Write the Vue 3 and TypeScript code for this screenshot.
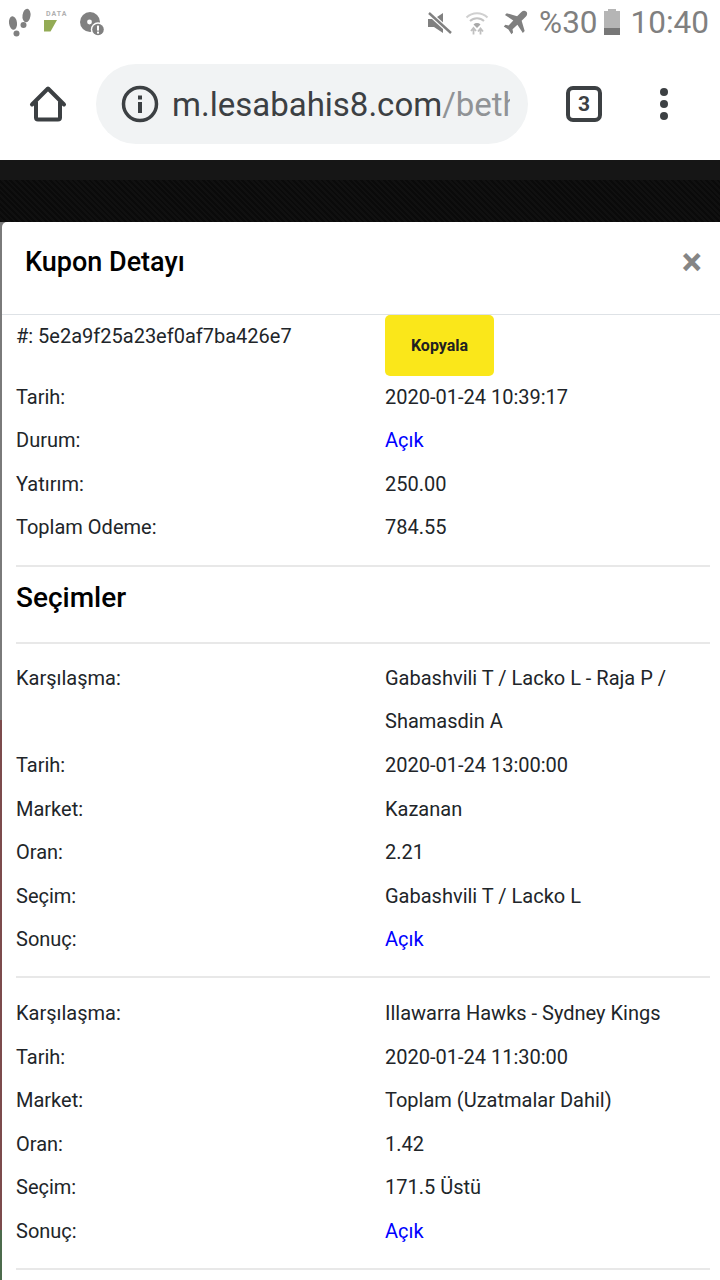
<script setup lang="ts">
interface Row { label: string; value: string; open?: boolean }
const summary: Row[] = [
  { label: 'Tarih:', value: '2020-01-24 10:39:17' },
  { label: 'Durum:', value: 'Açık', open: true },
  { label: 'Yatırım:', value: '250.00' },
  { label: 'Toplam Odeme:', value: '784.55' },
]
const selections: Row[][] = [
  [
    { label: 'Karşılaşma:', value: 'Gabashvili T / Lacko L - Raja P / Shamasdin A' },
    { label: 'Tarih:', value: '2020-01-24 13:00:00' },
    { label: 'Market:', value: 'Kazanan' },
    { label: 'Oran:', value: '2.21' },
    { label: 'Seçim:', value: 'Gabashvili T / Lacko L' },
    { label: 'Sonuç:', value: 'Açık', open: true },
  ],
  [
    { label: 'Karşılaşma:', value: 'Illawarra Hawks - Sydney Kings' },
    { label: 'Tarih:', value: '2020-01-24 11:30:00' },
    { label: 'Market:', value: 'Toplam (Uzatmalar Dahil)' },
    { label: 'Oran:', value: '1.42' },
    { label: 'Seçim:', value: '171.5 Üstü' },
    { label: 'Sonuç:', value: 'Açık', open: true },
  ],
]
</script>

<template>
  <div class="screen">
    <header class="status">
      <div class="status-left">
        <svg width="24" height="30" viewBox="0 0 24 30" class="steps">
          <ellipse cx="5" cy="15" rx="4" ry="6.8" fill="#808080" transform="rotate(-8 5 15)" />
          <circle cx="8.5" cy="25.5" r="3" fill="#808080" />
          <ellipse cx="18.5" cy="7.5" rx="4" ry="6.8" fill="#808080" transform="rotate(8 18.5 7.5)" />
          <circle cx="15.5" cy="17" r="3" fill="#808080" />
        </svg>
        <div class="data">
          <span class="data-label">DATA</span>
          <svg width="14" height="12" viewBox="0 0 14 12"><polygon points="0,0 13,0 6.5,11.5 0,11.5" fill="#93ab55" /></svg>
        </div>
        <svg width="26" height="26" viewBox="0 0 26 26" class="disc">
          <circle cx="10" cy="10" r="10" fill="#808080" />
          <circle cx="9.5" cy="10" r="2.4" fill="#fff" />
          <circle cx="18" cy="17.5" r="7.2" fill="#fff" />
          <circle cx="18" cy="17.5" r="5.8" fill="#808080" />
          <rect x="17" y="13.6" width="2" height="5" fill="#fff" />
          <rect x="17" y="19.6" width="2" height="2" fill="#fff" />
        </svg>
      </div>
      <div class="status-right">
        <svg width="26" height="22" viewBox="0 0 26 22" class="mute">
          <path d="M1 7h6l9-6v20l-9-6H1z" fill="#808080" />
          <path d="M2 1l22 20" stroke="#fff" stroke-width="5" />
          <path d="M2 1l22 20" stroke="#808080" stroke-width="2.4" />
        </svg>
        <svg width="24" height="26" viewBox="0 0 24 26" class="wifi" fill="none">
          <path d="M1.5 7.5a15 15 0 0 1 21 0" stroke="#d0d0d0" stroke-width="2" />
          <path d="M5 11a10 10 0 0 1 14 0" stroke="#c4c4c4" stroke-width="2" />
          <path d="M8.5 14.5a5 5 0 0 1 7 0L12 18z" fill="#a8a8a8" />
          <path d="M8.5 18.5v6M6 21l2.5-3 2.500 3M15.500 24.500v-6M13 21.500l2.500-3 2.500 3" stroke="#c0c0c0" stroke-width="1.800" />
        </svg>
        <svg width="26" height="26" viewBox="0 0 24 24" class="plane">
          <path d="M21.500 1.500c-1.200-1.200-3.200-1-4.500.3l-4 4L3.500 3 1.800 4.700l7.700 5-4.300 4.500-3-.5L.7 15.200l4.300 2.800 2.800 4.300 1.500-1.500-.5-3 4.500-4.300 5 7.700 1.700-1.700-2.800-9.500 4-4c1.300-1.300 1.500-3.300.3-4.500z" fill="#808080" />
        </svg>
        <span class="pct">%30</span>
        <span class="battery"><span class="battery-level"></span></span>
        <span class="time">10:40</span>
      </div>
    </header>

    <div class="toolbar">
      <svg width="40" height="40" viewBox="0 0 40 40" class="home" fill="none">
        <path d="M4 20.500L20 4.500l16 16M8 18v15.500a2 2 0 0 0 2 2h20a2 2 0 0 0 2-2V18" stroke="#3c4043" stroke-width="4" stroke-linejoin="round" stroke-linecap="round" />
      </svg>
      <div class="omnibox">
        <svg width="38" height="38" viewBox="0 0 38 38" class="info" fill="none">
          <circle cx="19" cy="19" r="16.500" stroke="#3c4043" stroke-width="3.500" />
          <rect x="17" y="17" width="4" height="11" fill="#3c4043" />
          <rect x="17" y="10.500" width="4" height="4" fill="#3c4043" />
        </svg>
        <div class="url">m.lesabahis8.com<span class="url-path">/beth</span></div>
      </div>
      <div class="tabs">3</div>
      <div class="dots"><i></i><i></i><i></i></div>
    </div>

    <main class="page">
      <div class="page-bar"></div>
      <section class="modal">
        <div class="modal-head">
          <h5 class="modal-title">Kupon Detayı</h5>
          <span class="close">×</span>
        </div>
        <div class="modal-body">
          <div class="row first">
            <div>#: 5e2a9f25a23ef0af7ba426e7</div>
            <div><button class="copy" type="button">Kopyala</button></div>
          </div>
          <div v-for="r in summary" :key="r.label" class="row">
            <div>{{ r.label }}</div>
            <div :class="{ open: r.open }">{{ r.value }}</div>
          </div>
          <hr class="rule rule-a" />
          <h4 class="section">Seçimler</h4>
          <hr class="rule rule-b" />
          <template v-for="(sel, i) in selections" :key="i">
            <div v-for="r in sel" :key="r.label" class="row">
              <div>{{ r.label }}</div>
              <div :class="{ open: r.open }">{{ r.value }}</div>
            </div>
            <hr class="rule rule-c" />
          </template>
        </div>
      </section>
    </main>
  </div>
</template>

<style>
html, body { margin: 0; background: #fff; }
</style>

<style scoped>
.screen { width: 720px; height: 1280px; overflow: hidden; font-family: Roboto, "Liberation Sans", sans-serif; background: #fff; }
.status { height: 50px; display: flex; justify-content: space-between; box-sizing: border-box; }
.status-left { display: flex; align-items: flex-start; padding-left: 8px; }
.steps { margin-top: 8px; }
.data { margin-left: 12px; margin-top: 10px; display: flex; flex-direction: column; width: 24px; }
.data-label { font-size: 7px; font-weight: 700; letter-spacing: 1px; line-height: 8px; color: #b0b0b0; margin-left: 2px; margin-bottom: 2px; }
.disc { margin-left: 12px; margin-top: 12px; }
.status-right { display: flex; align-items: flex-start; padding-right: 11px; color: #808080; }
.mute { margin-top: 12px; }
.wifi { margin-left: 12px; margin-top: 10px; }
.plane { margin-left: 14px; margin-top: 10px; }
.pct, .time { font-size: 31.500px; line-height: 46px; color: #808080; }
.pct { margin-left: 10px; }
.battery { width: 16px; height: 24px; margin: 11px 0 0 6px; background: #b5b5b5; position: relative; display: flex; align-items: flex-end; }
.battery::before { content: ""; position: absolute; top: -2px; left: 4px; width: 8px; height: 2px; background: #b5b5b5; }
.battery-level { width: 100%; height: 7px; background: #777; }
.time { margin-left: 11px; }

.toolbar { height: 110px; display: flex; align-items: flex-start; position: relative; }
.home { margin: 34px 0 0 28px; }
.omnibox { margin: 14px 0 0 28px; width: 432px; height: 80px; border-radius: 40px; background: #f1f3f4; display: flex; align-items: center; box-sizing: border-box; padding-left: 25px; }
.url { margin-left: 13px; width: 338px; overflow: hidden; white-space: nowrap; font-size: 33px; color: #3c4043; }
.url-path { color: #909396; }
.tabs { margin: 36px 0 0 38px; width: 36px; height: 36px; box-sizing: border-box; border: 4px solid #3c4043; border-radius: 7px; display: flex; align-items: center; justify-content: center; font-size: 21px; font-weight: 700; color: #3c4043; }
.dots { margin: 38px 0 0 58px; display: flex; flex-direction: column; gap: 4px; }
.dots i { width: 8px; height: 8px; border-radius: 50%; background: #3c4043; display: block; }

.page { height: 1120px; overflow: hidden; background: linear-gradient(to bottom, #0c0c0c 0 62px, #7a7a7a 62px 560px, #7c4b4c 560px 1070px, #4c6b4c 1070px); position: relative; }
.page-bar { height: 20px; margin-bottom: 42px; background: #161616; }
.page::before { content: ""; position: absolute; top: 20px; left: 0; right: 0; height: 42px; background: repeating-linear-gradient(45deg, #0a0a0a 0 2px, #101010 2px 4px); }
.modal { position: relative; margin-left: 2px; background: #fff; border-top-left-radius: 5px; height: 1058px; color: #212529; }
.modal-head { height: 93px; box-sizing: border-box; border-bottom: 1px solid #dee2e6; display: flex; align-items: flex-start; justify-content: space-between; padding: 0 18px 0 23px; }
.modal-title { margin: 0; font-size: 27px; font-weight: 500; line-height: 80px; color: #000; }
.close { font-size: 38px; font-weight: 700; line-height: 80px; color: #858585; }
.modal-body { padding: 0 10px 0 14px; font-size: 20px; }
.row { display: grid; grid-template-columns: 369px 1fr; line-height: 43.600px; }
.row.first { height: 60.500px; }
.open { color: #0000ff; }
.copy { display: block; width: 109px; height: 61px; border: 0; padding: 0; border-radius: 5px; background: #fae71a; color: #212121; font: 700 16px Roboto, "Liberation Sans", sans-serif; }
.rule { border: 0; border-top: 2px solid #e8e8e8; margin: 0; }
.rule-a { margin-top: 15px; }
.section { margin: 0; font-size: 28px; font-weight: 500; line-height: 62px; height: 75px; color: #000; }
.rule-b { margin-bottom: 13px; }
.rule-c { margin: 14px 0; }
</style>
